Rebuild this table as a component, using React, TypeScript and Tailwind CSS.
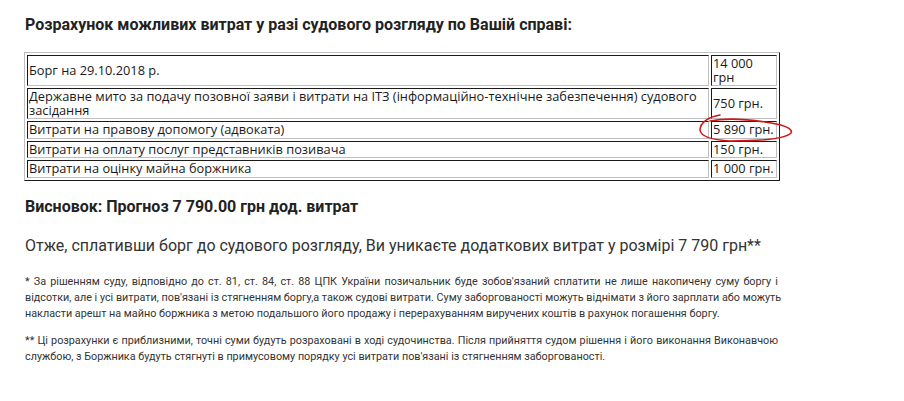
import React from "react";

const rows: { label: React.ReactNode; value: React.ReactNode }[] = [
  { label: "Борг на 29.10.2018 р.", value: (<>14 000<br />грн</>) },
  {
    label: (
      <>
        Державне мито за подачу позовної заяви і витрати на ІТЗ (інформаційно-технічне забезпечення) судового
        <br />
        засідання
      </>
    ),
    value: "750 грн.",
  },
  { label: "Витрати на правову допомогу (адвоката)", value: "5 890 грн." },
  { label: "Витрати на оплату послуг представників позивача", value: "150 грн." },
  { label: "Витрати на оцінку майна боржника", value: "1 000 грн." },
];

const note1 = [
  "* За рішенням суду, відповідно до ст. 81, ст. 84, ст. 88 ЦПК України позичальник буде зобов'язаний сплатити не лише накопичену суму боргу і",
  "відсотки, але і усі витрати, пов'язані із стягненням боргу,а також судові витрати. Суму заборгованості можуть віднімати з його зарплати або можуть",
  "накласти арешт на майно боржника з метою подальшого його продажу і перерахуванням виручених коштів в рахунок погашення боргу.",
];
const note2 = [
  "** Ці розрахунки є приблизними, точні суми будуть розраховані в ході судочинства. Після прийняття судом рішення і його виконання Виконавчою",
  "службою, з Боржника будуть стягнуті в примусовому порядку усі витрати пов'язані із стягненням заборгованості.",
];

function Note({ lines, className }: { lines: string[]; className: string }) {
  return (
    <div className={"w-[753px] text-[10.8px] leading-[16px] text-[#333] " + className}>
      {lines.map((l, i) => (
        <div
          key={i}
          className={i < lines.length - 1 ? "text-justify [text-align-last:justify] whitespace-nowrap" : "whitespace-nowrap"}
        >
          {l}
        </div>
      ))}
    </div>
  );
}

export default function App() {
  return (
    <div className="w-[904px] h-[401px] bg-white overflow-hidden font-['Roboto',sans-serif]">
      <div className="pl-[25px] w-[780px] pt-[13px]">
        <h2 className="text-[16px] leading-[24px] font-bold text-[#222]">
          Розрахунок можливих витрат у разі судового розгляду по Вашій справі:
        </h2>
        <div className="relative mt-[15px] -ml-px">
          <table className="w-[756px] border-separate border-spacing-[2px] border border-t-[#bfbfbf] border-l-[#bfbfbf] border-r-[#1a1a1a] border-b-[#1a1a1a] font-['Open_Sans',sans-serif] text-[12.8px] leading-[13.5px] text-[#1a1a1a]">
            <tbody>
              {rows.map((r, i) => (
                <tr key={i}>
                  <td className="p-px align-middle border border-t-[#1a1a1a] border-l-[#1a1a1a] border-r-[#bfbfbf] border-b-[#bfbfbf]">
                    {r.label}
                  </td>
                  <td className="w-[66px] p-px align-middle whitespace-nowrap border border-t-[#1a1a1a] border-l-[#1a1a1a] border-r-[#bfbfbf] border-b-[#bfbfbf]">
                    {r.value}
                  </td>
                </tr>
              ))}
            </tbody>
          </table>
          <svg
            className="absolute left-[666px] top-[57px] pointer-events-none"
            width="110"
            height="40"
            viewBox="690 110 110 40"
          >
            <path
              d="M 720 116 C 708 118, 700 124, 700 131 C 701 138, 712 141, 730 142 C 760 142, 785 140, 791 134 C 794 129, 780 125, 765 123 C 745 120, 725 119, 710 122"
              fill="none"
              stroke="#d01818"
              strokeWidth="1.6"
              strokeLinecap="round"
            />
          </svg>
        </div>
        <p className="mt-[14px] text-[16px] leading-[24px] font-bold text-[#222]">
          Висновок: Прогноз 7 790.00 грн дод. витрат
        </p>
        <p className="mt-[15px] text-[16px] leading-[24px] text-[#333]">
          Отже, сплативши борг до судового розгляду, Ви уникаєте додаткових витрат у розмірі 7 790 грн**
        </p>
        <Note lines={note1} className="mt-[16px]" />
        <Note lines={note2} className="mt-[11px]" />
      </div>
    </div>
  );
}
